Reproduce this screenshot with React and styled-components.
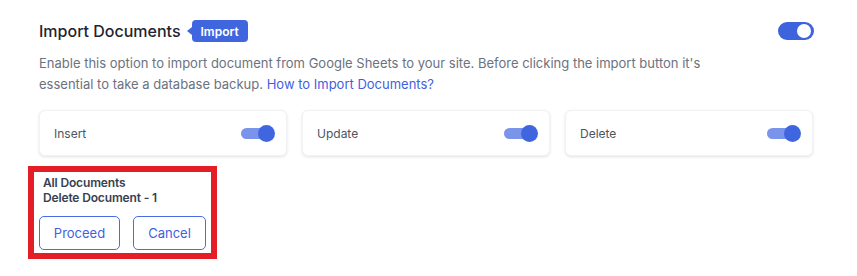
import React from "react";
import styled, { createGlobalStyle } from "styled-components";

const GlobalStyle = createGlobalStyle`
  body {
    margin: 0;
    background: #ffffff;
    font-family: Inter, "Noto Sans", sans-serif;
  }
`;

const Page = styled.section`
  padding: 19px 43px 0 39px;
`;

const Header = styled.div`
  display: flex;
  align-items: center;
  justify-content: space-between;
  height: 24px;
`;

const TitleGroup = styled.div`
  display: flex;
  align-items: center;
`;

const Title = styled.h2`
  margin: 0;
  font-size: 16px;
  font-weight: 500;
  color: #1f2430;
  line-height: 24px;
`;

const Badge = styled.span`
  position: relative;
  margin-left: 11px;
  height: 22px;
  padding: 0 9px;
  display: inline-flex;
  align-items: center;
  background: #3f66de;
  color: #ffffff;
  font-size: 12px;
  font-weight: 600;
  border-radius: 4px;

  &::before {
    content: "";
    position: absolute;
    left: -5px;
    top: 7px;
    border-top: 4px solid transparent;
    border-bottom: 4px solid transparent;
    border-right: 5px solid #3f66de;
  }
`;

const Switch = styled.span`
  position: relative;
  display: inline-block;
  width: 36px;
  height: 18px;
  border-radius: 9px;
  background: #3d63dd;

  &::after {
    content: "";
    position: absolute;
    top: 2px;
    right: 3px;
    width: 14px;
    height: 14px;
    border-radius: 50%;
    background: #ffffff;
  }
`;

const Description = styled.p`
  margin: 10px 0 0;
  max-width: 690px;
  font-size: 13px;
  line-height: 21px;
  color: #6b7280;
`;

const Link = styled.a`
  color: #3f5fe0;
  text-decoration: none;
`;

const Options = styled.div`
  display: grid;
  grid-template-columns: repeat(3, 1fr);
  gap: 15px;
  margin-top: 15px;
  margin-right: 1px;
`;

const Card = styled.div`
  height: 46px;
  box-sizing: border-box;
  display: flex;
  align-items: center;
  justify-content: space-between;
  padding: 0 11px 0 14px;
  background: #ffffff;
  border: 1px solid #f1f2f5;
  border-radius: 6px;
  box-shadow: 0 1px 3px rgba(16, 24, 40, 0.12);
`;

const Label = styled.span`
  font-size: 12px;
  color: #4b5563;
`;

const MiniSwitch = styled.span`
  position: relative;
  display: inline-block;
  width: 34px;
  height: 17px;

  &::before {
    content: "";
    position: absolute;
    left: 0;
    top: 3px;
    width: 30px;
    height: 11px;
    border-radius: 6px;
    background: #7b94eb;
  }

  &::after {
    content: "";
    position: absolute;
    right: 0;
    top: 0;
    width: 17px;
    height: 17px;
    border-radius: 50%;
    background: #3f66de;
  }
`;

const Highlight = styled.div`
  width: fit-content;
  margin: 10px 0 0 -11px;
  border: 6px solid #e41e26;
  padding: 3px 5px 3px 5px;
`;

const Summary = styled.div`
  padding-left: 4px;
  font-size: 12px;
  font-weight: 600;
  letter-spacing: -0.15px;
  line-height: 15px;
  color: #374151;
`;

const Actions = styled.div`
  display: flex;
  gap: 13px;
  margin-top: 11px;
`;

const OutlineButton = styled.button`
  height: 34px;
  width: ${(props) => props.$width}px;
  box-sizing: border-box;
  background: #ffffff;
  border: 1px solid #4a6ee0;
  border-radius: 5px;
  color: #3f5fe0;
  font-family: Inter, "Noto Sans", sans-serif;
  font-size: 13px;
  padding: 0;
`;

const options = ["Insert", "Update", "Delete"];

export default function App() {
  return (
    <>
      <GlobalStyle />
      <Page>
        <Header>
          <TitleGroup>
            <Title>Import Documents</Title>
            <Badge>Import</Badge>
          </TitleGroup>
          <Switch />
        </Header>
        <Description>
          Enable this option to import document from Google Sheets to your site. Before clicking
          the import button it's essential to take a database backup.{" "}
          <Link href="#">How to Import Documents?</Link>
        </Description>
        <Options>
          {options.map((name) => (
            <Card key={name}>
              <Label>{name}</Label>
              <MiniSwitch />
            </Card>
          ))}
        </Options>
        <Highlight>
          <Summary>
            <div>All Documents</div>
            <div>Delete Document - 1</div>
          </Summary>
          <Actions>
            <OutlineButton $width={81}>Proceed</OutlineButton>
            <OutlineButton $width={73}>Cancel</OutlineButton>
          </Actions>
        </Highlight>
      </Page>
    </>
  );
}
